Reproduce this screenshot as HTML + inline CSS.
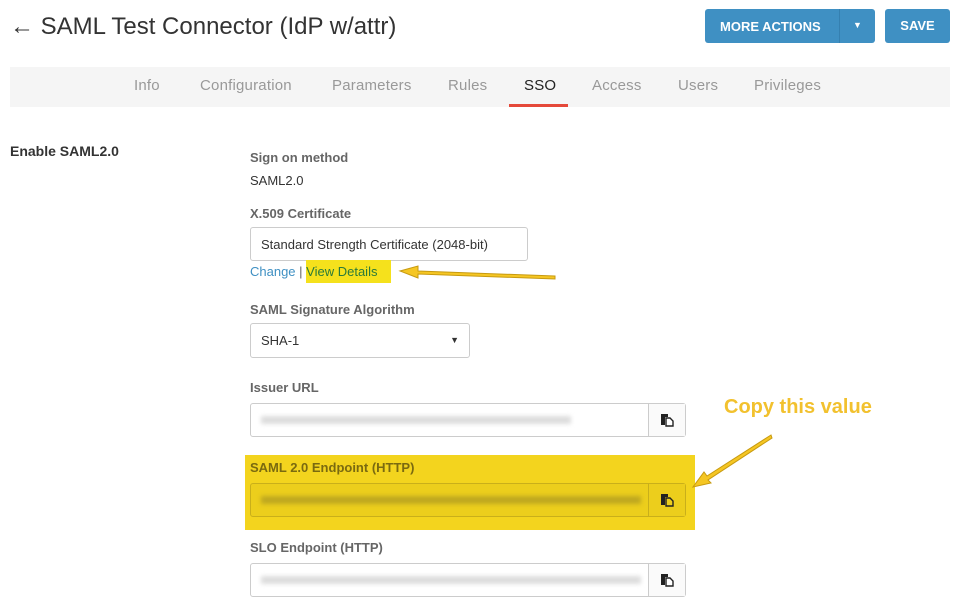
<!DOCTYPE html>
<html><head><style>
body{margin:0;width:961px;height:612px;background:#fff;font-family:"Liberation Sans",sans-serif;position:relative;overflow:hidden;color:#333}
.a{position:absolute}
.lbl{position:absolute;left:250px;font-size:13px;font-weight:bold;color:#666}
.inp{position:absolute;left:250px;width:436px;height:34px;border:1px solid #ccc;border-radius:3px;background:#fff;box-sizing:border-box}
.cp{position:absolute;right:0;top:0;width:36px;height:100%;border-left:1px solid #ccc;background:#fafafa}
.cp svg{position:absolute;left:11px;top:9px}
.blur{position:absolute;left:10px;top:12px;height:8px;width:380px;background:#ddd;filter:blur(2px)}
.tab{position:absolute;top:77px;font-size:15px;color:#999;letter-spacing:0.2px}
</style></head><body>
<div class="a" style="left:10px;top:13px;font-size:24px;color:#333">&larr; SAML Test Connector (IdP w/attr)</div>
<div class="a" style="left:705px;top:9px;width:170px;height:34px;background:#3f90c3;border-radius:3px;color:#fff;font-size:13px;font-weight:bold">
<span class="a" style="left:15px;top:10px">MORE ACTIONS</span>
<span class="a" style="left:134px;top:0;width:1px;height:34px;background:#3580b0"></span>
<span class="a" style="left:148px;top:11px;font-size:9px">&#9660;</span></div>
<div class="a" style="left:885px;top:9px;width:65px;height:34px;background:#3f90c3;border-radius:3px;color:#fff;font-size:13px;font-weight:bold;text-align:center;line-height:34px">SAVE</div>
<div class="a" style="left:10px;top:67px;width:940px;height:40px;background:#f5f5f5"></div>
<span class="tab" style="left:134px">Info</span>
<span class="tab" style="left:200px">Configuration</span>
<span class="tab" style="left:332px">Parameters</span>
<span class="tab" style="left:448px">Rules</span>
<span class="tab" style="left:524px;color:#222">SSO</span>
<div class="a" style="left:509px;top:104px;width:59px;height:3px;background:#e5493a"></div>
<span class="tab" style="left:592px">Access</span>
<span class="tab" style="left:678px">Users</span>
<span class="tab" style="left:754px">Privileges</span>
<div class="a" style="left:10px;top:143px;font-size:14px;font-weight:bold;color:#333">Enable SAML2.0</div>
<div class="lbl" style="top:150px">Sign on method</div>
<div class="a" style="left:250px;top:173px;font-size:13px;color:#333">SAML2.0</div>
<div class="lbl" style="top:206px">X.509 Certificate</div>
<div class="a" style="left:250px;top:227px;width:278px;height:34px;border:1px solid #ccc;border-radius:3px;box-sizing:border-box;font-size:13px;padding:9px 10px">Standard Strength Certificate (2048-bit)</div>
<div class="a" style="left:306px;top:260px;width:85px;height:23px;background:#f5e11c"></div>
<div class="a" style="left:250px;top:264px;font-size:13px;color:#3f90c3">Change <span style="color:#666">|</span> <span style="color:#2a7a3a">View Details</span></div>
<div class="lbl" style="top:302px">SAML Signature Algorithm</div>
<div class="a" style="left:250px;top:323px;width:220px;height:35px;border:1px solid #ccc;border-radius:3px;box-sizing:border-box;font-size:13px;padding:9px 10px">SHA-1<span class="a" style="right:10px;top:11px;font-size:9px">&#9660;</span></div>
<div class="lbl" style="top:380px">Issuer URL</div>
<div class="inp" style="top:403px"><div class="blur" style="width:310px"></div><div class="cp"><svg width="14" height="14"><path d="M1 1h7v3h-3v8H1z" fill="#222"/><path d="M6 5h4l3 3v5H6z" fill="#fff" stroke="#222" stroke-width="1.4"/></svg></div></div>
<div class="a" style="left:245px;top:455px;width:450px;height:75px;background:#f3d41e"></div>
<div class="lbl" style="top:460px;color:#7a6a10">SAML 2.0 Endpoint (HTTP)</div>
<div class="inp" style="top:483px;background:#ecce1c;border-color:#c9af1a"><div class="blur" style="background:#bfa820"></div><div class="cp" style="background:#ecce1c;border-color:#c9af1a"><svg width="14" height="14"><path d="M1 1h7v3h-3v8H1z" fill="#222"/><path d="M6 5h4l3 3v5H6z" fill="#ecce1c" stroke="#222" stroke-width="1.4"/></svg></div></div>
<div class="lbl" style="top:540px">SLO Endpoint (HTTP)</div>
<div class="inp" style="top:563px"><div class="blur"></div><div class="cp"><svg width="14" height="14"><path d="M1 1h7v3h-3v8H1z" fill="#222"/><path d="M6 5h4l3 3v5H6z" fill="#fff" stroke="#222" stroke-width="1.4"/></svg></div></div>
<div class="a" style="left:724px;top:396px;font-size:20px;font-weight:bold;color:#f2c12e">Copy this value</div>
<svg class="a" style="left:0;top:0" width="961" height="612">
<g fill="#f5c623" stroke="#c79a10" stroke-width="1">
<path d="M555 276 L418 271 L418 266 L400 271 L418 278 L418 274 L555 279Z"/>
<path d="M771 435 L707 476 L704 472 L693 487 L711 483 L708 480 L772 438Z"/>
</g></svg>
</body></html>
